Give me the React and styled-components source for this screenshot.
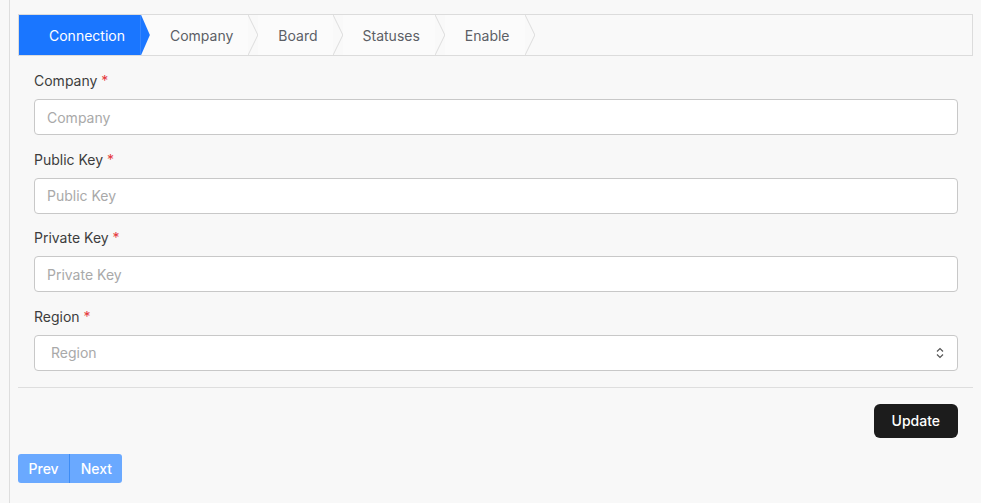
import React from "react";
import styled, { createGlobalStyle } from "styled-components";

const GlobalStyle = createGlobalStyle`
  * { box-sizing: border-box; }
  body {
    margin: 0;
    background: #f8f8f8;
    font-family: Inter, "Noto Sans", sans-serif;
    font-size: 14px;
    color: #333;
  }
`;

const steps = ["Connection", "Company", "Board", "Statuses", "Enable"];

const fields = [
  { label: "Company", placeholder: "Company" },
  { label: "Public Key", placeholder: "Public Key" },
  { label: "Private Key", placeholder: "Private Key" },
];

const Arrow = ({ active }) => (
  <ArrowSvg width="10" height="41" viewBox="0 0 10 41">
    {active ? (
      <polygon points="0,0 1,0 10,20.5 1,41 0,41" fill="#1a76ff" />
    ) : (
      <polyline points="0,0 10,20.5 0,41" fill="none" stroke="#dcdcdc" strokeWidth="1" />
    )}
  </ArrowSvg>
);

const UpDown = () => (
  <svg width="8" height="12" viewBox="0 0 8 12">
    <polyline points="1,4.5 4,1.5 7,4.5" fill="none" stroke="#555" strokeWidth="1.2" />
    <polyline points="1,7.5 4,10.5 7,7.5" fill="none" stroke="#555" strokeWidth="1.2" />
  </svg>
);

export default function App() {
  return (
    <>
      <GlobalStyle />
      <Page>
        <Steps>
          {steps.map((s, i) => (
            <React.Fragment key={s}>
              <Step active={i === 0} first={i === 0}>
                {s}
              </Step>
              <Arrow active={i === 0} />
            </React.Fragment>
          ))}
        </Steps>
        <Form>
          {fields.map((f) => (
            <Group key={f.label}>
              <Label>
                {f.label} <Req>*</Req>
              </Label>
              <Input placeholder={f.placeholder} />
            </Group>
          ))}
          <Group>
            <Label>
              Region <Req>*</Req>
            </Label>
            <SelectWrap>
              <Select defaultValue="">
                <option value="" disabled>
                  Region
                </option>
              </Select>
              <SelectIcon>
                <UpDown />
              </SelectIcon>
            </SelectWrap>
          </Group>
        </Form>
        <Divider />
        <Actions>
          <Update>Update</Update>
        </Actions>
        <Pager>
          <PageBtn>Prev</PageBtn>
          <PageBtn>Next</PageBtn>
        </Pager>
      </Page>
    </>
  );
}

const Page = styled.div`
  margin-left: 9px;
  border-left: 1px solid #dedede;
  min-height: 100vh;
  padding: 14px 8px 0 8px;
`;

const Steps = styled.div`
  display: flex;
  align-items: stretch;
  height: 42px;
  border: 1px solid #dcdcdc;
  background: #f9f9f9;
`;

const Step = styled.div`
  display: flex;
  align-items: center;
  padding: 0 15px 0 ${(p) => (p.first ? "30px" : "20px")};
  background: ${(p) => (p.active ? "#1a76ff" : "#fbfbfb")};
  color: ${(p) => (p.active ? "#fff" : "#5c5f66")};
  font-size: 14px;
`;

const ArrowSvg = styled.svg`
  display: block;
  flex-shrink: 0;
  height: 40px;
`;

const Form = styled.div`
  padding: 15px 15px 0 16px;
`;

const Group = styled.div`
  margin-bottom: 14.5px;
  &:last-child {
    margin-bottom: 0;
  }
`;

const Label = styled.div`
  font-size: 14px;
  line-height: 20px;
  color: #3d3d3d;
  margin-bottom: 8px;
`;

const Req = styled.span`
  color: #e5383b;
`;

const Input = styled.input`
  display: block;
  width: 100%;
  height: 36px;
  border: 1px solid #c8c8c8;
  border-radius: 4px;
  background: #fff;
  padding: 0 12px;
  font-family: inherit;
  font-size: 14px;
  color: #333;
  outline: none;
  &::placeholder {
    color: #a9a9a9;
  }
`;

const SelectWrap = styled.div`
  position: relative;
`;

const Select = styled.select`
  display: block;
  width: 100%;
  height: 36px;
  appearance: none;
  border: 1px solid #c8c8c8;
  border-radius: 4px;
  background: #fff;
  padding: 0 16px;
  font-family: inherit;
  font-size: 14px;
  color: #a9a9a9;
  outline: none;
`;

const SelectIcon = styled.span`
  position: absolute;
  right: 14px;
  top: 50%;
  transform: translateY(-50%);
  display: flex;
  pointer-events: none;
`;

const Divider = styled.hr`
  border: 0;
  border-top: 1px solid #dedede;
  margin: 16px 0 0;
`;

const Actions = styled.div`
  display: flex;
  justify-content: flex-end;
  padding: 16px 15px 0;
`;

const Update = styled.button`
  height: 34px;
  padding: 0 18px;
  border: 0;
  border-radius: 6px;
  background: #1c1c1c;
  color: #fff;
  font-family: inherit;
  font-size: 14px;
  font-weight: 500;
`;

const Pager = styled.div`
  display: inline-flex;
  margin-top: 16px;
  border-radius: 3px;
  overflow: hidden;
`;

const PageBtn = styled.button`
  height: 29px;
  padding: 0 10.5px;
  border: 0;
  background: #6aa9ff;
  color: #fff;
  font-family: inherit;
  font-size: 14px;
  font-weight: 500;
  & + & {
    border-left: 1px solid #3d8cf5;
  }
`;
